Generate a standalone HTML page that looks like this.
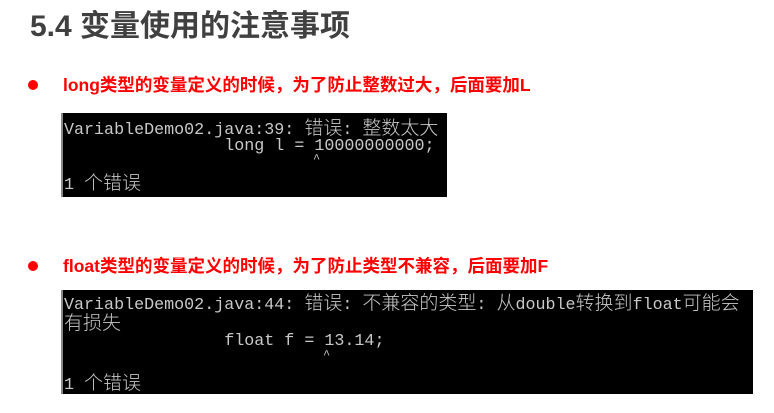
<!DOCTYPE html>
<html><head><meta charset="utf-8"><style>
body{margin:0;width:774px;height:413px;background:#fff;position:relative;overflow:hidden;}
.t{position:absolute;left:30px;top:9px;font:bold 30px "Liberation Sans","Noto Sans CJK SC",sans-serif;color:#404040;line-height:36px;white-space:nowrap;}
.b{position:absolute;left:63px;font:bold 17.5px "Liberation Sans","Noto Sans CJK SC",sans-serif;color:#f00;line-height:22px;white-space:nowrap;}
.dot{position:absolute;left:28px;width:10px;height:10px;border-radius:50%;background:#f00;}
.box{position:absolute;background:#000;border-left:2px solid #888;}
.l{position:absolute;left:1px;font:16.7px "Liberation Mono",monospace;color:#c8c8c8;white-space:pre;line-height:20px;}
.c{font-family:"Noto Sans CJK SC",sans-serif;font-size:19px;font-weight:300;}
.k{position:absolute;font:12px "Liberation Mono",monospace;color:#c8c8c8;line-height:12px;}
</style></head><body>
<div class="t">5.4 变量使用的注意事项</div>
<div class="dot" style="top:80px"></div>
<div class="b" style="top:74px">long类型的变量定义的时候，为了防止整数过大，后面要加L</div>
<div class="box" style="left:61px;top:113px;width:384px;height:84px">
<div class="l" style="top:4px">VariableDemo02.java:39: <span class="c">错误</span>: <span class="c">整数太大</span></div>
<div class="l" style="top:24px">                long l = 10000000000;</div>
<div class="k" style="left:250px;top:40px">^</div>
<div class="l" style="top:59px">1 <span class="c">个错误</span></div>
</div>
<div class="dot" style="top:261px"></div>
<div class="b" style="top:255px">float类型的变量定义的时候，为了防止类型不兼容，后面要加F</div>
<div class="box" style="left:61px;top:290px;width:690px;height:104px">
<div class="l" style="top:2px">VariableDemo02.java:44: <span class="c">错误</span>: <span class="c">不兼容的类型</span>: <span class="c">从</span>double<span class="c">转换到</span>float<span class="c">可能会</span></div>
<div class="l" style="top:22px"><span class="c">有损失</span></div>
<div class="l" style="top:42px">                float f = 13.14;</div>
<div class="k" style="left:260px;top:59px">^</div>
<div class="l" style="top:82px">1 <span class="c">个错误</span></div>
</div>
</body></html>
